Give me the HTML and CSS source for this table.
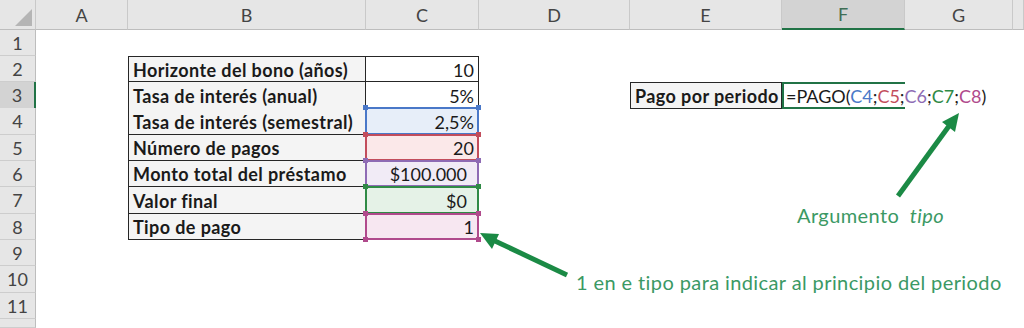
FILE: index.html
```html
<!DOCTYPE html>
<html lang="es">
<head>
<meta charset="utf-8">
<title>Función PAGO</title>
<link rel="stylesheet" href="styles.css">
</head>
<body>
<div class="sheet">
  <div class="row head">
    <div class="corner"><span class="tri"></span></div>
    <div class="ch">A</div>
    <div class="ch">B</div>
    <div class="ch">C</div>
    <div class="ch">D</div>
    <div class="ch">E</div>
    <div class="ch sel">F</div>
    <div class="ch">G</div>
    <div class="ch"></div>
  </div>
  <div class="row">
    <div class="rh">1</div>
    <div class="c"></div><div class="c"></div><div class="c"></div><div class="c"></div><div class="c"></div><div class="c"></div><div class="c"></div><div class="c"></div>
  </div>
  <div class="row">
    <div class="rh">2</div>
    <div class="c"></div>
    <div class="c lbl top">Horizonte del bono (años)</div>
    <div class="c val top">10</div>
    <div class="c"></div><div class="c"></div><div class="c"></div><div class="c"></div><div class="c"></div>
  </div>
  <div class="row">
    <div class="rh sel">3</div>
    <div class="c"></div>
    <div class="c lbl">Tasa de interés (anual)</div>
    <div class="c val">5%</div>
    <div class="c"></div>
    <div class="c lbl top">Pago por periodo</div>
    <div class="c active"><span class="formula">=PAGO(<span class="k-blue">C4</span>;<span class="k-red">C5</span>;<span class="k-purple">C6</span>;<span class="k-green">C7</span>;<span class="k-pink">C8</span>)</span><span class="cursor"></span></div>
    <div class="c"></div><div class="c"></div>
  </div>
  <div class="row h27">
    <div class="rh">4</div>
    <div class="c"></div>
    <div class="c lbl">Tasa de interés (semestral)</div>
    <div class="c val ref r-blue">2,5%</div>
    <div class="c"></div><div class="c"></div><div class="c"></div><div class="c"></div><div class="c"></div>
  </div>
  <div class="row">
    <div class="rh">5</div>
    <div class="c"></div>
    <div class="c lbl">Número de pagos</div>
    <div class="c val ref r-red">20</div>
    <div class="c"></div><div class="c"></div><div class="c"></div><div class="c"></div><div class="c"></div>
  </div>
  <div class="row">
    <div class="rh">6</div>
    <div class="c"></div>
    <div class="c lbl">Monto total del préstamo</div>
    <div class="c val cur ref r-purple">$100.000</div>
    <div class="c"></div><div class="c"></div><div class="c"></div><div class="c"></div><div class="c"></div>
  </div>
  <div class="row h27">
    <div class="rh">7</div>
    <div class="c"></div>
    <div class="c lbl">Valor final</div>
    <div class="c val cur ref r-green">$0</div>
    <div class="c"></div><div class="c"></div><div class="c"></div><div class="c"></div><div class="c"></div>
  </div>
  <div class="row">
    <div class="rh">8</div>
    <div class="c"></div>
    <div class="c lbl">Tipo de pago</div>
    <div class="c val ref r-pink">1</div>
    <div class="c"></div><div class="c"></div><div class="c"></div><div class="c"></div><div class="c"></div>
  </div>
  <div class="row">
    <div class="rh">9</div>
    <div class="c"></div><div class="c"></div><div class="c"></div><div class="c"></div><div class="c"></div><div class="c"></div><div class="c"></div><div class="c"></div>
  </div>
  <div class="row h27">
    <div class="rh">10</div>
    <div class="c"></div><div class="c"></div><div class="c"></div><div class="c"></div><div class="c"></div><div class="c"></div><div class="c"></div><div class="c"></div>
  </div>
  <div class="row">
    <div class="rh">11</div>
    <div class="c"></div><div class="c"></div><div class="c"></div><div class="c"></div><div class="c"></div><div class="c"></div><div class="c"></div><div class="c"></div>
  </div>
  <div class="row tail">
    <div class="rh"></div>
    <div class="c"></div><div class="c"></div><div class="c"></div><div class="c"></div><div class="c"></div><div class="c"></div><div class="c"></div><div class="c"></div>
  </div>

  <div class="notes">
    <svg class="arrows" width="1024" height="328" viewBox="0 0 1024 328" aria-hidden="true">
      <line x1="567" y1="275" x2="495" y2="241" />
      <polygon points="480,233 499,234 492,249" />
      <line x1="898" y1="196" x2="949" y2="126" />
      <polygon points="959,113 955,132 942,122" />
    </svg>
    <span class="note note-arg">Argumento <em>tipo</em></span>
    <span class="note note-one">1 en e tipo para indicar al principio del periodo</span>
  </div>
</div>
</body>
</html>
```

FILE: styles.css
```css
* { box-sizing: border-box; margin: 0; padding: 0; }
html, body { background: #fff; }
body {
  width: 1024px;
  height: 328px;
  overflow: hidden;
  font-family: Lato, "Liberation Sans", sans-serif;
}

.sheet {
  position: relative;
  display: flex;
  flex-direction: column;
  height: 328px;
  overflow: hidden;
}

.row {
  display: grid;
  grid-template-columns: 36px 92px 238px 113px 151px 152px 123px 108px 11px;
  height: 26px;
  flex: none;
}
.row.head { height: 30px; }
.row.h27 { height: 27px; }
.row.tail { height: 9px; }

/* headers */
.corner {
  position: relative;
  background: #e6e6e6;
  border-right: 1px solid #c9c9c9;
  border-bottom: 1px solid #bdbdbd;
}
.tri {
  position: absolute;
  right: 3px;
  bottom: 3px;
  width: 0;
  height: 0;
  border-left: 17px solid transparent;
  border-bottom: 17px solid #b5b5b5;
}
.ch {
  background: #e6e6e6;
  border-right: 1px solid #c9c9c9;
  border-bottom: 1px solid #bdbdbd;
  color: #444;
  font-size: 18px;
  display: flex;
  align-items: center;
  justify-content: center;
}
.ch.sel {
  background: #d3d3d3;
  color: #3f6e55;
  border-bottom: 2px solid #217346;
}
.rh {
  background: #e6e6e6;
  border-right: 1px solid #bdbdbd;
  border-bottom: 1px solid #cdcdcd;
  color: #444;
  font-size: 18px;
  display: flex;
  align-items: center;
  justify-content: center;
}
.rh.sel {
  background: #d3d3d3;
  border-right: 2px solid #217346;
}

/* cells */
.c {
  position: relative;
  display: flex;
  align-items: center;
  padding: 1px 4px 0;
  font-size: 18px;
  color: #1a1a1a;
  white-space: nowrap;
}
.lbl {
  font-weight: 700;
  letter-spacing: 0.4px;
  background: #f4f4f4;
  border-left: 1px solid #262626;
  border-right: 1px solid #262626;
  border-bottom: 1px solid #262626;
}
.lbl.top, .val.top { border-top: 1px solid #262626; }
.val {
  justify-content: flex-end;
  border-right: 1px solid #262626;
  border-bottom: 1px solid #262626;
}
.val.cur { padding-right: 11px; }

/* formula references */
.ref { --w: 113px; --h: 26px; }
.row.h27 .ref { --h: 27px; }
.ref::before {
  content: "";
  position: absolute;
  inset: -1px;
  border: 2px solid var(--rc);
}
.ref::after {
  content: "";
  position: absolute;
  left: -3px;
  top: -3px;
  width: 5px;
  height: 5px;
  background: var(--rc);
  box-shadow: var(--w) 0 0 var(--rc), 0 var(--h) 0 var(--rc), var(--w) var(--h) 0 var(--rc);
}
.r-blue { --rc: #4a78c8; background: #e7eef9; }
.r-red { --rc: #c24d5c; background: #fbe8e9; }
.r-purple { --rc: #8e6bb4; background: #f1ebf6; }
.r-green { --rc: #2f8a45; background: #e5f2e7; }
.r-pink { --rc: #b04a8c; background: #f7e7f1; }

.k-blue { color: #4a78c8; }
.k-red { color: #c24d5c; }
.k-purple { color: #8e6bb4; }
.k-green { color: #2f8a45; }
.k-pink { color: #b04a8c; }

/* active cell in edit mode */
.active {
  border: 2px solid #217346;
  border-right: none;
  padding-left: 2px;
  z-index: 1;
}
.formula { color: #1a1a1a; }
.cursor {
  display: inline-block;
  width: 1px;
  height: 19px;
  background: #111;
  margin-left: 2px;
}

/* annotations */
.notes {
  position: absolute;
  inset: 0;
  pointer-events: none;
  z-index: 5;
}
.arrows { position: absolute; left: 0; top: 0; }
.arrows line { stroke: #1b8a45; stroke-width: 5; }
.arrows polygon { fill: #1b8a45; }
.note {
  position: absolute;
  font-family: Lato, "Open Sans", sans-serif;
  font-size: 20px;
  letter-spacing: 0.4px;
  line-height: 24px;
  color: #3b9964;
  white-space: nowrap;
}
.note em { font-style: italic; margin-left: 5px; }
.note-arg { left: 797px; top: 203px; }
.note-one { left: 576px; top: 270px; }
```
